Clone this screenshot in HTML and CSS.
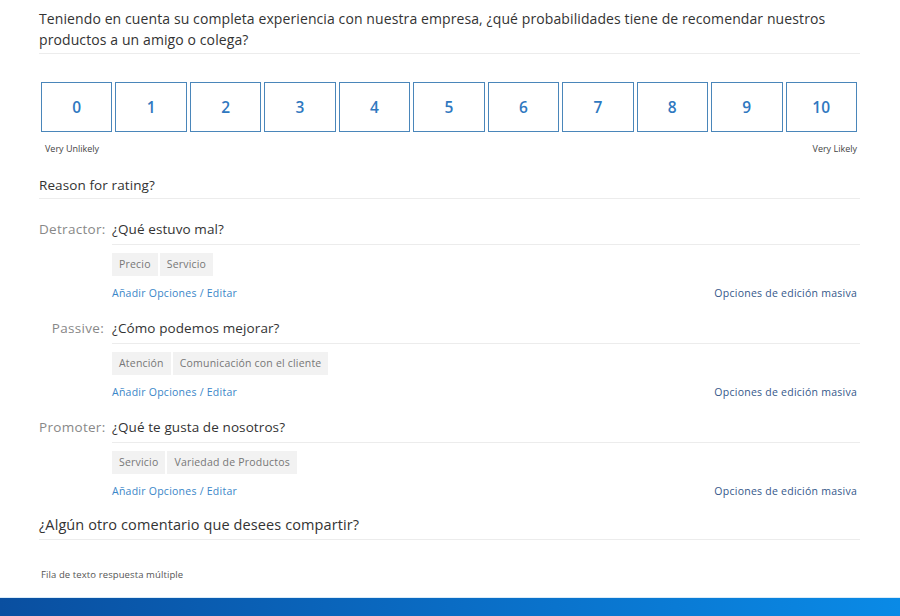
FILE: index.html
```html
<!DOCTYPE html>
<html lang="es">
<head>
    <meta charset="UTF-8">
    <meta name="viewport" content="width=device-width, initial-scale=1.0">
    <title>Encuesta NPS</title>
    <link rel="stylesheet" href="styles.css">
</head>
<body>
    <div class="survey">
        <div class="question">
            Teniendo en cuenta su completa experiencia con nuestra empresa, ¿qué probabilidades tiene de recomendar nuestros productos a un amigo o colega?
        </div>

        <div class="scale">
            <div class="scale-box">0</div>
            <div class="scale-box">1</div>
            <div class="scale-box">2</div>
            <div class="scale-box">3</div>
            <div class="scale-box">4</div>
            <div class="scale-box">5</div>
            <div class="scale-box">6</div>
            <div class="scale-box">7</div>
            <div class="scale-box">8</div>
            <div class="scale-box">9</div>
            <div class="scale-box">10</div>
        </div>
        <div class="scale-labels">
            <span>Very Unlikely</span>
            <span>Very Likely</span>
        </div>

        <div class="reason">Reason for rating?</div>

        <div class="group">
            <div class="group-label">Detractor:</div>
            <div class="group-body">
                <div class="group-question">¿Qué estuvo mal?</div>
                <div class="chips">
                    <span class="chip">Precio</span>
                    <span class="chip">Servicio</span>
                </div>
                <div class="links">
                    <a class="link-add">Añadir Opciones / Editar</a>
                    <a class="link-bulk">Opciones de edición masiva</a>
                </div>
            </div>
        </div>

        <div class="group">
            <div class="group-label">Passive:</div>
            <div class="group-body">
                <div class="group-question">¿Cómo podemos mejorar?</div>
                <div class="chips">
                    <span class="chip">Atención</span>
                    <span class="chip">Comunicación con el cliente</span>
                </div>
                <div class="links">
                    <a class="link-add">Añadir Opciones / Editar</a>
                    <a class="link-bulk">Opciones de edición masiva</a>
                </div>
            </div>
        </div>

        <div class="group">
            <div class="group-label">Promoter:</div>
            <div class="group-body">
                <div class="group-question">¿Qué te gusta de nosotros?</div>
                <div class="chips">
                    <span class="chip">Servicio</span>
                    <span class="chip">Variedad de Productos</span>
                </div>
                <div class="links">
                    <a class="link-add">Añadir Opciones / Editar</a>
                    <a class="link-bulk">Opciones de edición masiva</a>
                </div>
            </div>
        </div>

        <div class="comment">¿Algún otro comentario que desees compartir?</div>
        <div class="comment-hint">Fila de texto respuesta múltiple</div>
    </div>

    <div class="footer-bar"></div>
</body>
</html>
```

FILE: styles.css
```css
body {
    margin: 0;
    font-family: 'Open Sans', 'Noto Sans', sans-serif;
    color: #333;
    background: #fff;
    display: flex;
    flex-direction: column;
    min-height: 100vh;
    letter-spacing: 0.1px;
}

.survey {
    padding: 8px 40px 0 39px;
}

.question {
    font-size: 14px;
    line-height: 21px;
    color: #333;
    padding-bottom: 3px;
    border-bottom: 1px solid #ececec;
}

.scale {
    display: grid;
    grid-template-columns: repeat(11, 1fr);
    gap: 3px;
    margin: 28px 3px 0 2px;
}

.scale-box {
    height: 48px;
    border: 1px solid #4a86ba;
    display: flex;
    align-items: center;
    justify-content: center;
    color: #2f78c0;
    font-weight: 600;
    font-size: 15.5px;
}

.scale-labels {
    display: flex;
    justify-content: space-between;
    margin: 11px 3px 0 6px;
    font-size: 9px;
    line-height: 12px;
    color: #444;
    letter-spacing: 0;
}

.reason {
    margin-top: 20px;
    font-size: 13.5px;
    line-height: 20px;
    padding-bottom: 3px;
    border-bottom: 1px solid #ececec;
}

.group {
    display: grid;
    grid-template-columns: 65px 1fr;
    column-gap: 8px;
    margin-top: 20px;
}

.group + .group {
    margin-top: 17px;
}

.group-label {
    text-align: right;
    font-size: 13.5px;
    line-height: 20px;
    color: #888;
    letter-spacing: 0.3px;
}

.group-question {
    font-size: 13.5px;
    line-height: 20px;
    color: #333;
    padding-bottom: 5px;
    border-bottom: 1px solid #ececec;
}

.chips {
    display: flex;
    gap: 2px;
    margin-top: 8px;
}

.chip {
    background: #f2f2f2;
    color: #777;
    font-size: 10.5px;
    line-height: 23px;
    padding: 0 7px;
    letter-spacing: 0.2px;
}

.links {
    display: flex;
    justify-content: space-between;
    margin-top: 10px;
    font-size: 10.5px;
    line-height: 15px;
    padding-right: 3px;
    letter-spacing: 0.25px;
}

.link-add {
    color: #3a86c8;
}

.link-bulk {
    color: #35588a;
}

.comment {
    margin-top: 15px;
    font-size: 14.5px;
    line-height: 21px;
    padding-bottom: 4px;
    border-bottom: 1px solid #ececec;
}

.comment-hint {
    margin: 28px 0 0 2px;
    font-size: 9.5px;
    line-height: 14px;
    color: #555;
}

.footer-bar {
    margin-top: auto;
    height: 18px;
    border-top: 1px solid #d9ecfa;
    background: linear-gradient(to right, #0a4fa0, #0a6cc4 50%, #0a8ae6);
}
```
